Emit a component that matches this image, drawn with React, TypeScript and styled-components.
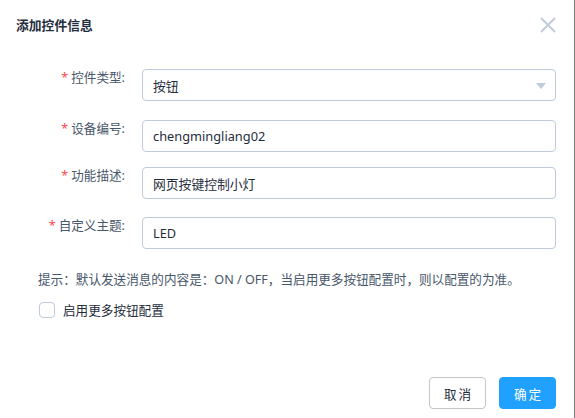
import React from "react";
import styled, { createGlobalStyle } from "styled-components";

const Global = createGlobalStyle`
  html, body { margin: 0; padding: 0; background: #fff; }
  body { font-family: "Noto Sans", "Noto Sans CJK SC", sans-serif; }
  * { box-sizing: border-box; }
`;

const Dialog = styled.div`
  width: 575px;
  height: 418px;
  background: #fff;
  border-right: 1px solid #7a7a7a;
  display: flex;
  flex-direction: column;
`;

const Header = styled.div`
  display: flex;
  align-items: center;
  justify-content: space-between;
  padding: 13px 18px 0 16px;
  height: 37px;
`;

const Title = styled.div`
  font-size: 12.8px;
  font-weight: 700;
  color: #1f2d3d;
  line-height: 20px;
`;

const Close = styled.button`
  border: none;
  background: none;
  padding: 0;
  width: 16px;
  height: 16px;
  display: flex;
  cursor: pointer;
`;

const Form = styled.div`
  display: flex;
  flex-direction: column;
  padding: 32px 18px 0 30px;
`;

const Row = styled.div<{ $mb: number }>`
  display: flex;
  align-items: flex-start;
  margin-bottom: ${(p) => p.$mb}px;
`;

const Label = styled.div`
  flex: none;
  width: 112px;
  padding-right: 17px;
  text-align: right;
  font-size: 12.6px;
  line-height: 18px;
  color: #48576a;
  white-space: nowrap;
`;

const Star = styled.span`
  color: #ff4949;
  margin-right: 3px;
`;

const Field = styled.div`
  position: relative;
  width: 414px;
  height: 32px;
  border: 1px solid #bfcbd9;
  border-radius: 4px;
  padding: 0 10px;
  display: flex;
  align-items: center;
  font-size: 12.8px;
  color: #1f2d3d;
`;

const Arrow = styled.span`
  position: absolute;
  right: 9px;
  top: 13px;
  width: 0;
  height: 0;
  border-left: 5px solid transparent;
  border-right: 5px solid transparent;
  border-top: 6px solid #bfcbd9;
`;

const Hint = styled.div`
  margin: 22px 0 0 38px;
  font-size: 12.6px;
  line-height: 18px;
  color: #48576a;
`;

const CheckRow = styled.label`
  display: flex;
  align-items: center;
  margin: 11px 0 0 39px;
  gap: 8px;
  font-size: 12.6px;
  color: #1f2d3d;
`;

const Box = styled.span`
  width: 16px;
  height: 16px;
  border: 1px solid #bfcbd9;
  border-radius: 4px;
  background: #fff;
`;

const Footer = styled.div`
  margin-top: auto;
  display: flex;
  justify-content: flex-end;
  gap: 13px;
  padding: 0 18px 9px 0;
`;

const Btn = styled.button<{ $primary?: boolean }>`
  width: 57px;
  height: 32px;
  border-radius: 4px;
  font-size: 12.6px;
  letter-spacing: 2px;
  padding: 0 0 0 2px;
  font-family: "Noto Sans", "Noto Sans CJK SC", sans-serif;
  border: 1px solid ${(p) => (p.$primary ? "#20a0ff" : "#c4c4c4")};
  background: ${(p) => (p.$primary ? "#20a0ff" : "#fff")};
  color: ${(p) => (p.$primary ? "#fff" : "#1f2d3d")};
`;

const rows = [
  { label: "控件类型:", value: "按钮", select: true, mb: 19 },
  { label: "设备编号:", value: "chengmingliang02", mb: 15 },
  { label: "功能描述:", value: "网页按键控制小灯", mb: 18 },
  { label: "自定义主题:", value: "LED", mb: 0 },
];

export default function App() {
  return (
    <>
      <Global />
      <Dialog>
        <Header>
          <Title>添加控件信息</Title>
          <Close aria-label="close">
            <svg width="16" height="16" viewBox="0 0 16 16">
              <path d="M1 1L15 15M15 1L1 15" stroke="#bfcbd9" strokeWidth="1.8" />
            </svg>
          </Close>
        </Header>
        <Form>
          {rows.map((r) => (
            <Row key={r.label} $mb={r.mb}>
              <Label>
                <Star>*</Star>
                {r.label}
              </Label>
              <Field>
                {r.value}
                {r.select && <Arrow />}
              </Field>
            </Row>
          ))}
        </Form>
        <Hint>提示：默认发送消息的内容是：ON / OFF，当启用更多按钮配置时，则以配置的为准。</Hint>
        <CheckRow>
          <Box />
          启用更多按钮配置
        </CheckRow>
        <Footer>
          <Btn>取消</Btn>
          <Btn $primary>确定</Btn>
        </Footer>
      </Dialog>
    </>
  );
}
